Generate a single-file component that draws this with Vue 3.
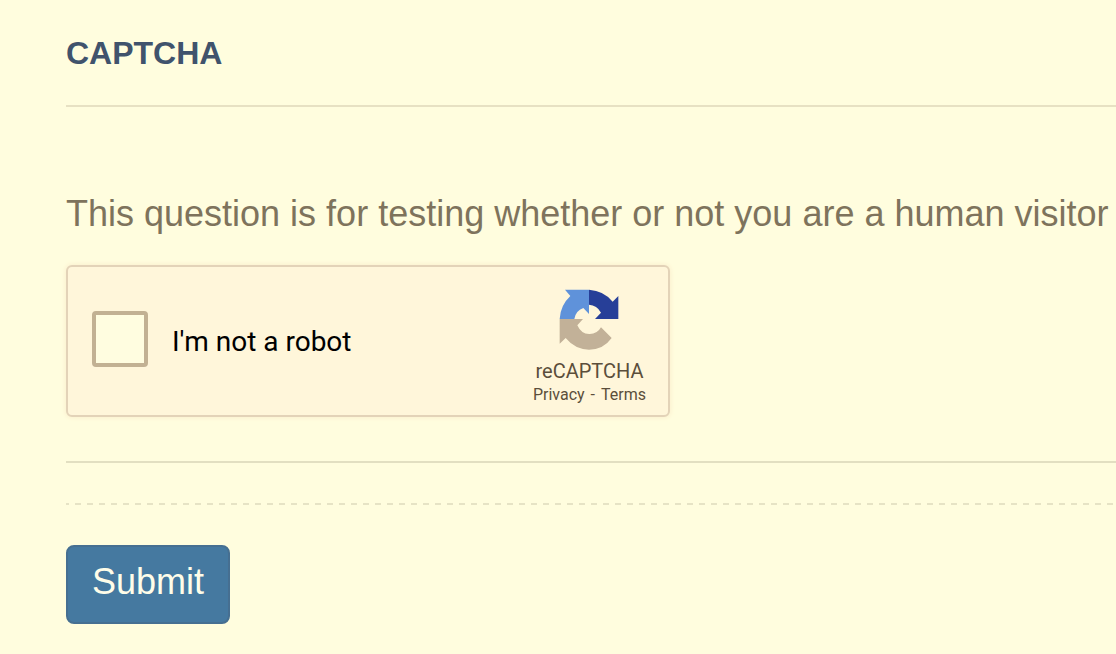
<script setup>
import { ref } from 'vue'

const checked = ref(false)
</script>

<template>
  <form class="page" @submit.prevent>
    <h2 class="title">CAPTCHA</h2>
    <section class="challenge">
      <p class="description">This question is for testing whether or not you are a human visitor</p>
      <div class="widget">
        <label class="check">
          <input v-model="checked" class="box" type="checkbox" />
          <span class="check-text">I'm not a robot</span>
        </label>
        <div class="brand">
          <svg class="logo" viewBox="60 41 180 183" aria-hidden="true">
            <path fill="#5f92da" d="M78 43H150V116L133 98Q110 106 106 131H62Q64 90 94 62Z" />
            <path fill="#273f98" d="M150 43Q195 46 221 79L238 62V131H168L186 112Q174 89 150 88Z" />
            <path fill="#c2b198" d="M62 131H132L115 150Q127 177 152 176Q175 176 186 156L218 188Q193 223 150 223Q108 222 80 188L62 205Z" />
          </svg>
          <span class="name">reCAPTCHA</span>
          <span class="links"><a href="#privacy">Privacy</a><span>-</span><a href="#terms">Terms</a></span>
        </div>
      </div>
    </section>
    <div class="actions">
      <button class="submit" type="submit">Submit</button>
    </div>
  </form>
</template>

<style>
body {
  background: #fffdde;
}
</style>

<style scoped>
.page {
  padding: 33px 0 30px 66px;
  font-family: "Liberation Sans", Arial, sans-serif;
}

.title {
  margin: 0;
  padding-bottom: 32px;
  border-bottom: 2px solid #e7e1c3;
  color: #40536c;
  font-size: 32px;
  line-height: 40px;
}

.challenge {
  padding: 85px 0 44px;
  border-bottom: 2px solid #e2dfc1;
}

.description {
  margin: 0 0 29px;
  color: #7e735c;
  font-size: 36px;
  line-height: 44px;
  white-space: nowrap;
}

.widget {
  display: flex;
  justify-content: space-between;
  box-sizing: border-box;
  width: 604px;
  max-width: 100%;
  height: 152px;
  padding: 0 22px 0 24px;
  border: 2px solid #e3d3b8;
  border-radius: 6px;
  background: #fff6da;
  box-shadow: 0 0 4px 1px #fbf0cf;
  font-family: Roboto, sans-serif;
}

.check {
  display: flex;
  align-items: center;
  gap: 24px;
  padding-bottom: 4px;
  color: #000;
  font-size: 28px;
  line-height: 34px;
}

.check-text {
  padding-top: 6px;
}

.box {
  appearance: none;
  box-sizing: border-box;
  width: 56px;
  height: 56px;
  margin: 0;
  border: 4px solid #c2b193;
  border-radius: 4px;
  background: #fffde0;
}

.box:checked {
  background: #5f92da;
}

.brand {
  display: flex;
  flex-direction: column;
  align-items: center;
  padding-top: 22px;
  color: #5b4e3b;
}

.logo {
  width: 60px;
  height: 61px;
}

.name {
  margin-top: 9px;
  font-size: 20px;
  line-height: 24px;
}

.links {
  display: flex;
  gap: 6px;
  font-size: 16px;
  line-height: 24px;
}

.links a {
  color: inherit;
  text-decoration: none;
}

.actions {
  margin-top: 40px;
  padding-top: 42px;
  background: repeating-linear-gradient(to right, #e6e3c5 0 3px, transparent 3px 9px, #e6e3c5 9px 12px) top / 100% 2px no-repeat;
}

.submit {
  display: block;
  padding: 13px 24px 19px;
  border: 2px solid #466f91;
  border-radius: 8px;
  background: #4579a0;
  color: #fffde9;
  font-family: inherit;
  font-size: 36px;
  line-height: 43px;
}
</style>
